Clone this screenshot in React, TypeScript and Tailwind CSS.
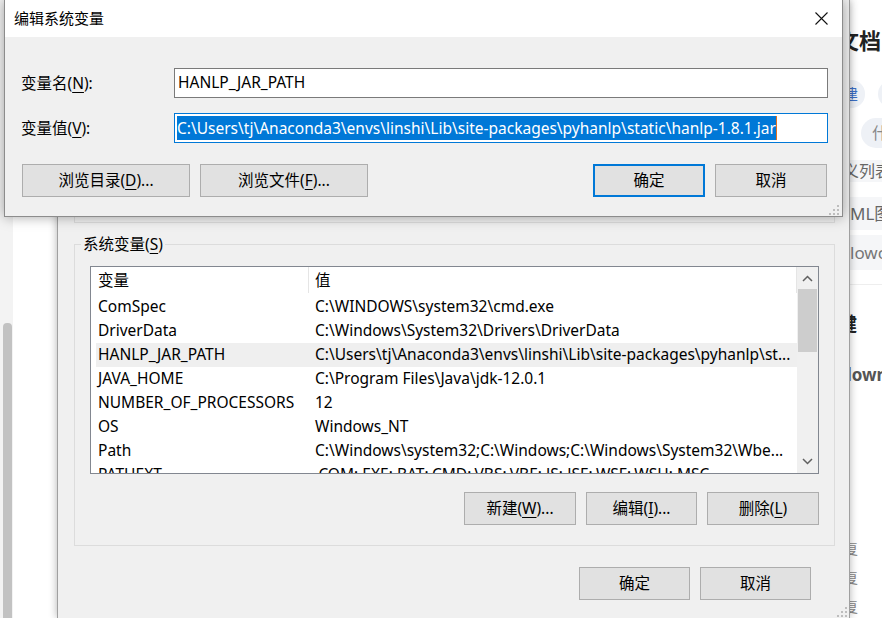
import React from "react";

function U({ children }: { children: React.ReactNode }) {
  return <span className="underline decoration-1 underline-offset-[3px]">{children}</span>;
}

function Grip() {
  const pts = [
    [9, 1],
    [5, 5],
    [9, 5],
    [1, 9],
    [5, 9],
    [9, 9],
  ];
  return (
    <svg width="11" height="11" viewBox="0 0 11 11">
      {pts.map(([x, y], i) => (
        <rect key={i} x={x} y={y} width="2" height="2" fill="#bdbdbd" />
      ))}
    </svg>
  );
}

function Btn({ children, className }: { children: React.ReactNode; className: string }) {
  return (
    <div className={"h-[33px] flex items-center justify-center bg-[#e1e1e1] text-[15.5px] text-black " + className}>
      {children}
    </div>
  );
}

const rows: [string, string][] = [
  ["ComSpec", "C:\\WINDOWS\\system32\\cmd.exe"],
  ["DriverData", "C:\\Windows\\System32\\Drivers\\DriverData"],
  ["HANLP_JAR_PATH", "C:\\Users\\tj\\Anaconda3\\envs\\linshi\\Lib\\site-packages\\pyhanlp\\st..."],
  ["JAVA_HOME", "C:\\Program Files\\Java\\jdk-12.0.1"],
  ["NUMBER_OF_PROCESSORS", "12"],
  ["OS", "Windows_NT"],
  ["Path", "C:\\Windows\\system32;C:\\Windows;C:\\Windows\\System32\\Wbe..."],
  ["PATHEXT", ".COM;.EXE;.BAT;.CMD;.VBS;.VBE;.JS;.JSE;.WSF;.WSH;.MSC"],
];

function Chevron({ up }: { up: boolean }) {
  return (
    <svg width="11" height="7" viewBox="0 0 11 7">
      <path
        d={up ? "M1 6 L5.5 1.5 L10 6" : "M1 1 L5.5 5.5 L10 1"}
        fill="none"
        stroke="#606060"
        strokeWidth="1.5"
      />
    </svg>
  );
}

function ListView() {
  return (
    <div className="mt-[11px] w-[729px] h-[208px] border border-[#828790] bg-white flex">
      <div className="flex-1 flex flex-col overflow-hidden">
        <div className="h-[28px] shrink-0 flex text-[15.5px]">
          <div className="w-[217px] pl-[7px] flex items-center">变量</div>
          <div className="w-px h-[26px] bg-[#e5e5e5]" />
          <div className="flex-1 pl-[6px] flex items-center">值</div>
          <div className="w-px h-[26px] bg-[#e5e5e5]" />
        </div>
        <div className="flex-1 flex flex-col overflow-hidden">
          {rows.map(([k, v]) => (
            <div
              key={k}
              className={
                k === "HANLP_JAR_PATH"
                  ? "ml-[5px] h-[24px] shrink-0 flex text-[15.5px] leading-[23px] bg-[#efefef]"
                  : "ml-[5px] h-[24px] shrink-0 flex text-[15.5px] leading-[23px]"
              }
            >
              <div className="w-[213px] pl-[2px] whitespace-nowrap overflow-hidden">{k}</div>
              <div className="flex-1 pl-[6px] whitespace-nowrap overflow-hidden">{v}</div>
            </div>
          ))}
        </div>
      </div>
      <div className="w-[21px] bg-[#f0f0f0] flex flex-col items-center">
        <div className="h-[22px] flex items-center justify-center">
          <Chevron up />
        </div>
        <div className="w-[19px] h-[63px] bg-[#cdcdcd]" />
        <div className="flex-1" />
        <div className="h-[22px] flex items-center justify-center pb-[2px]">
          <Chevron up={false} />
        </div>
      </div>
    </div>
  );
}

function RightPage() {
  return (
    <div className="flex-1 h-full bg-white overflow-hidden flex flex-col text-[#555]">
      <div className="h-[24px] shrink-0" />
      <div className="h-[32px] shrink-0 flex items-center ml-[-13px] whitespace-nowrap text-[22px] font-bold text-[#222]">
        文档
      </div>
      <div className="h-[24px] shrink-0" />
      <div className="h-[28px] shrink-0 flex whitespace-nowrap">
        <div className="ml-[-12px] w-[27px] h-[28px] shrink-0 rounded-full bg-[#eef1f6] flex items-center pl-[5px] text-[15px] text-[#3b6fc6]">
          建
        </div>
        <div className="ml-[13px] w-[30px] h-[28px] shrink-0 rounded-full bg-[#eef1f6]" />
      </div>
      <div className="h-[10px] shrink-0" />
      <div className="h-[30px] shrink-0 flex">
        <div className="ml-[11px] w-[40px] h-[30px] shrink-0 rounded-full bg-[#eef1f6] pl-[11px] flex items-center text-[16px] text-[#888]">
          什
        </div>
      </div>
      <div className="h-[12px] shrink-0" />
      <div className="h-[22px] shrink-0 bg-[#f5f6f8] flex items-center ml-[-7px] whitespace-nowrap text-[16px] text-[#666]">
        义列表
      </div>
      <div className="h-[15px] shrink-0" />
      <div className="h-[33px] shrink-0 bg-[#f5f6f8] flex items-center whitespace-nowrap text-[17px] text-[#666]">
        ML图
      </div>
      <div className="h-[5px] shrink-0" />
      <div className="h-[35px] shrink-0 bg-[#f5f6f8] flex items-center whitespace-nowrap text-[17px] text-[#777]">
        lowc
      </div>
      <div className="h-[15px] shrink-0 border-b border-[#eeeeee]" />
      <div className="h-[28px] shrink-0" />
      <div className="h-[24px] shrink-0 flex items-center ml-[-13px] whitespace-nowrap text-[20px] font-bold text-[#222]">
        键
      </div>
      <div className="h-[26px] shrink-0" />
      <div className="h-[24px] shrink-0 flex items-center ml-[-9px] whitespace-nowrap text-[17px] font-bold text-[#555]">
        down
      </div>
      <div className="h-[147px] shrink-0" />
      <div className="h-[28px] shrink-0 flex items-center ml-[-6px] text-[14px] text-[#888]">复</div>
      <div className="h-[1px] shrink-0" />
      <div className="h-[28px] shrink-0 flex items-center ml-[-6px] text-[14px] text-[#888]">复</div>
      <div className="h-[1px] shrink-0" />
      <div className="h-[28px] shrink-0 flex items-center ml-[-6px] text-[14px] text-[#888]">复</div>
    </div>
  );
}

export default function App() {
  return (
    <div className="relative w-[882px] h-[618px] overflow-hidden flex bg-white text-black font-['Noto_Sans','Noto_Sans_CJK_SC',sans-serif]">
      {/* left browser strip */}
      <div className="w-[57px] h-full flex bg-white">
        <div className="w-[13px] h-full bg-[#f3f3f3] pl-[3px] flex flex-col">
          <div className="mt-[323px] w-[9px] flex-1 bg-[#c2c2c2] rounded-t-[4px]" />
        </div>
      </div>

      {/* back dialog */}
      <div className="relative z-10 w-[793px] h-full bg-[#f0f0f0] border-x border-[#a0a0a0] shadow-[0_0_8px_rgba(0,0,0,0.3)] flex flex-col pl-[16px]">
        <div className="w-[761px] h-[223px] shrink-0 border-x border-b border-[#dcdcdc]" />
        <div className="mt-[21px] w-[761px] h-[302px] shrink-0 border border-[#dcdcdc] flex flex-col pl-[15px]">
          <div className="-mt-[12px] ml-[-9px] self-start px-[2px] bg-[#f0f0f0] text-[15.5px] leading-[22px]">
            系统变量(<U>S</U>)
          </div>
          <ListView />
          <div className="mt-[18px] w-[729px] flex justify-end gap-[10px]">
            <Btn className="w-[112px] border border-[#adadad]">
              新建(<U>W</U>)...
            </Btn>
            <Btn className="w-[111px] border border-[#adadad]">
              编辑(<U>I</U>)...
            </Btn>
            <Btn className="w-[112px] border border-[#adadad]">
              删除(<U>L</U>)
            </Btn>
          </div>
        </div>
        <div className="mt-[21px] w-[761px] flex justify-end gap-[10px] pr-[24px]">
          <Btn className="w-[111px] border border-[#adadad]">确定</Btn>
          <Btn className="w-[111px] border border-[#adadad]">取消</Btn>
        </div>
        <div className="absolute right-[2px] bottom-[1px]">
          <Grip />
        </div>
      </div>

      <RightPage />

      {/* front dialog */}
      <div className="absolute left-[4px] top-0 z-20 w-[839px] h-[217px] border-x border-b border-[#8c8c8c] bg-[#f0f0f0] shadow-[0_0_12px_rgba(0,0,0,0.35)] flex flex-col">
        <div className="h-[37px] shrink-0 bg-white flex items-center justify-between pl-[9px] pr-[14px]">
          <div className="text-[15px]">编辑系统变量</div>
          <svg width="13" height="13" viewBox="0 0 13 13">
            <path d="M0.5 0.5 L12.5 12.5 M12.5 0.5 L0.5 12.5" stroke="#111" strokeWidth="1.1" />
          </svg>
        </div>
        <div className="flex-1 flex flex-col pl-[16px] pr-[14px] pt-[31px] relative">
          <div className="flex items-center">
            <div className="w-[153px] text-[15.5px] pt-[2px]">
              变量名(<U>N</U>):
            </div>
            <div className="flex-1 h-[30px] border border-[#7a7a7a] bg-white flex items-center pl-[3px] text-[15.5px] whitespace-nowrap">
              HANLP_JAR_PATH
            </div>
          </div>
          <div className="mt-[15px] flex items-center">
            <div className="w-[153px] text-[15.5px] pt-[2px]">
              变量值(<U>V</U>):
            </div>
            <div className="flex-1 h-[30px] border border-[#0078d7] bg-white flex items-center pl-[2px] text-[15.5px] whitespace-nowrap overflow-hidden">
              <span className="bg-[#0078d7] text-white leading-[24px]">
                C:\Users\tj\Anaconda3\envs\linshi\Lib\site-packages\pyhanlp\static\hanlp-1.8.1.jar
              </span>
              <span className="w-px h-[24px] bg-[#e07020]" />
            </div>
          </div>
          <div className="mt-[21px] ml-[1px] flex">
            <Btn className="w-[168px] border border-[#adadad]">
              浏览目录(<U>D</U>)...
            </Btn>
            <Btn className="ml-[10px] w-[168px] border border-[#adadad]">
              浏览文件(<U>F</U>)...
            </Btn>
            <div className="flex-1" />
            <Btn className="w-[112px] border-2 border-[#0078d7]">确定</Btn>
            <Btn className="ml-[10px] mr-[1px] w-[112px] border border-[#adadad]">取消</Btn>
          </div>
          <div className="absolute right-[3px] bottom-[1px]">
            <Grip />
          </div>
        </div>
      </div>
    </div>
  );
}
